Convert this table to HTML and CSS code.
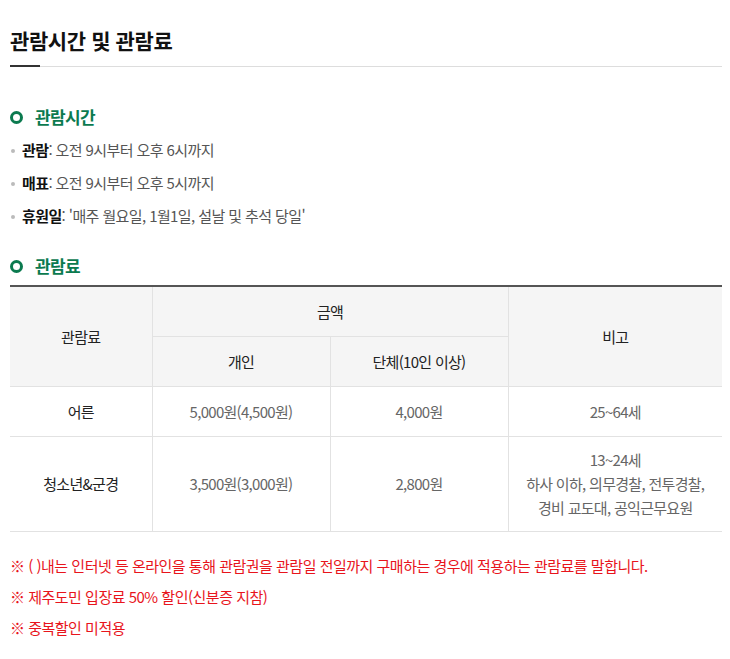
FILE: index.html
```html
<!DOCTYPE html>
<html lang="ko">
<head>
<meta charset="utf-8">
<link rel="stylesheet" href="styles.css">
</head>
<body>
<div class="page">
  <h2 class="title">관람시간 및 관람료</h2>
  <div class="divider"><span class="divider-bar"></span></div>

  <h3 class="sec-head"><span class="ring"></span>관람시간</h3>
  <ul class="info-list">
    <li><b>관람</b>: 오전 9시부터 오후 6시까지</li>
    <li><b>매표</b>: 오전 9시부터 오후 5시까지</li>
    <li><b>휴원일</b>: '매주 월요일, 1월1일, 설날 및 추석 당일'</li>
  </ul>

  <h3 class="sec-head sec-head2"><span class="ring"></span>관람료</h3>
  <table class="fee">
    <colgroup>
      <col class="c1"><col class="c2"><col class="c3"><col class="c4">
    </colgroup>
    <thead>
      <tr class="h1">
        <th rowspan="2">관람료</th>
        <th colspan="2">금액</th>
        <th rowspan="2">비고</th>
      </tr>
      <tr class="h2">
        <th>개인</th>
        <th>단체(10인 이상)</th>
      </tr>
    </thead>
    <tbody>
      <tr class="r1">
        <th>어른</th>
        <td>5,000원(4,500원)</td>
        <td>4,000원</td>
        <td>25~64세</td>
      </tr>
      <tr class="r2">
        <th>청소년&amp;군경</th>
        <td>3,500원(3,000원)</td>
        <td>2,800원</td>
        <td>13~24세<br>하사 이하, 의무경찰, 전투경찰,<br>경비 교도대, 공익근무요원</td>
      </tr>
    </tbody>
  </table>

  <ul class="notes">
    <li>※ ( )내는 인터넷 등 온라인을 통해 관람권을 관람일 전일까지 구매하는 경우에 적용하는 관람료를 말합니다.</li>
    <li>※ 제주도민 입장료 50% 할인(신분증 지참)</li>
    <li>※ 중복할인 미적용</li>
  </ul>
</div>
</body>
</html>
```

FILE: styles.css
```css
* { box-sizing: border-box; }
html, body { margin: 0; padding: 0; background: #fff; }
body {
  font-family: "Noto Sans CJK KR", "Noto Sans", sans-serif;
  color: #222;
}
.page { padding: 0 8px 0 10px; width: 730px; }

.title {
  margin: 0;
  padding-top: 24px;
  font-size: 21px;
  line-height: 32px;
  font-weight: 700;
  letter-spacing: -0.4px;
  color: #111;
}
.divider {
  margin-top: 10px;
  height: 1px;
  background: #ddd;
  position: relative;
}
.divider-bar {
  position: absolute;
  left: 0; top: -1px;
  width: 30px; height: 2px;
  background: #333;
}

.sec-head {
  margin: 38px 0 0;
  display: flex;
  align-items: center;
  font-size: 17px;
  line-height: 24px;
  font-weight: 700;
  letter-spacing: -0.6px;
  color: #0b7a4f;
}
.sec-head2 { margin-top: 22px; }
.ring {
  width: 13px; height: 13px;
  border: 3.5px solid #0b7a4f;
  border-radius: 50%;
  margin-right: 12px;
  flex: none;
}

.info-list {
  list-style: none;
  margin: 4px 0 0;
  padding: 0;
}
.info-list li {
  position: relative;
  padding-left: 12px;
  font-size: 15px;
  line-height: 33px;
  letter-spacing: -0.6px;
  color: #555;
}
.info-list li::before {
  content: "";
  position: absolute;
  left: 1px; top: 16px;
  width: 4px; height: 4px;
  border-radius: 50%;
  background: #bbb;
}
.info-list b { color: #111; font-weight: 700; }

.fee {
  margin-top: 7px;
  width: 712px;
  border-collapse: collapse;
  border-top: 2px solid #555;
  font-size: 15px;
  letter-spacing: -0.7px;
}
.c1 { width: 142px; }
.c2 { width: 178px; }
.c3 { width: 178px; }
.c4 { width: 214px; }
.fee th, .fee td {
  border: 1px solid #e2e2e2;
  text-align: center;
  vertical-align: middle;
  font-weight: 400;
  padding: 0 4px;
}
.fee tr > :first-child { border-left: 0; }
.fee tr > :last-child { border-right: 0; }
.fee thead th { background: #f5f5f5; color: #222; }
.fee .h1 th { height: 50px; }
.fee .h2 th { height: 50px; }
.fee tbody th { color: #222; }
.fee tbody td { color: #666; }
.fee .r1 > * { height: 50px; }
.fee .r2 > * { height: 95px; line-height: 24px; }

.notes {
  list-style: none;
  margin: 18px 0 0;
  padding: 0;
}
.notes li {
  font-size: 15px;
  line-height: 31px;
  letter-spacing: -0.5px;
  color: #e8141c;
}
```
